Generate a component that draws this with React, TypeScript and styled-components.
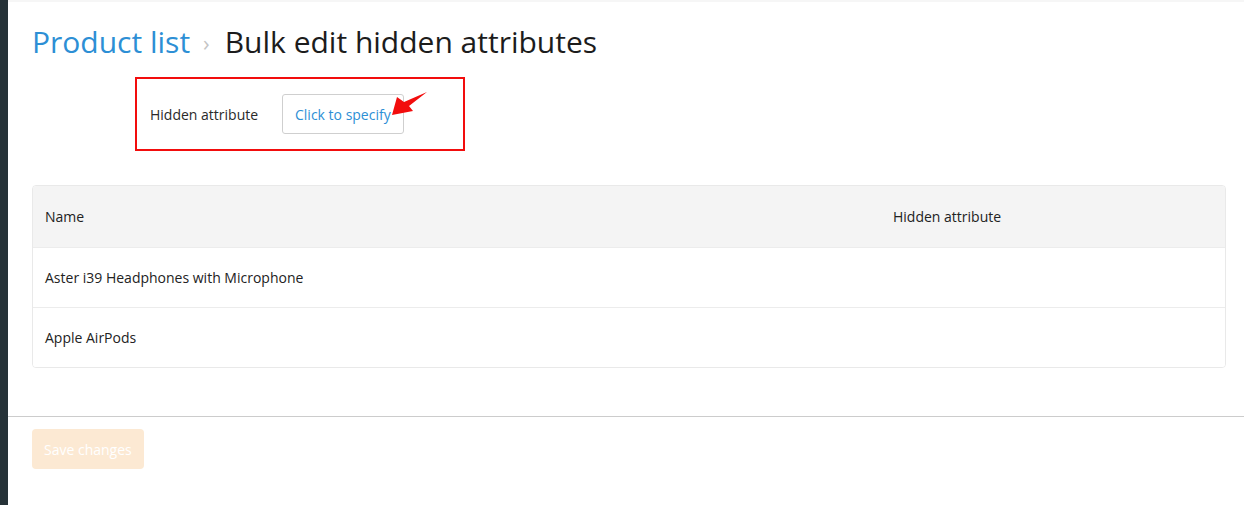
import React from "react";
import styled, { createGlobalStyle } from "styled-components";

const Global = createGlobalStyle`
  html, body { margin: 0; padding: 0; background: #fff; }
  body { font-family: "Open Sans", "Noto Sans", sans-serif; color: #333; }
  * { box-sizing: border-box; }
`;

const Shell = styled.div`
  display: flex;
  min-height: 505px;
`;

const Sidebar = styled.div`
  width: 8px;
  flex: none;
  background: #263238;
`;

const Main = styled.div`
  flex: 1;
  display: flex;
  flex-direction: column;
  border-top: 2px solid #f6f6f6;
`;

const Content = styled.div`
  padding: 0 18px 0 24px;
`;

const Title = styled.h1`
  margin: 20px 0 0;
  font-size: 30px;
  font-weight: 400;
  line-height: 40px;
  color: #1c1c1c;
  display: flex;
  align-items: center;
`;

const Crumb = styled.a`
  color: #2d8fd5;
  text-decoration: none;
`;

const Sep = styled.span`
  color: #c4c4c4;
  font-size: 22px;
  margin: 0 15px 0 13px;
`;

const Annotated = styled.div`
  position: relative;
  margin: 15px 0 0 103px;
  width: 330px;
  height: 74px;
  border: 2px solid #f20d0d;
  display: flex;
  align-items: center;
  padding-left: 13px;
`;

const Label = styled.span`
  font-size: 14px;
  color: #2a2a2a;
  width: 132px;
`;

const PickerButton = styled.button`
  height: 40px;
  padding: 0 12px;
  border: 1px solid #cfcfcf;
  border-radius: 3px;
  background: #fff;
  color: #2d8fd5;
  font-family: inherit;
  font-size: 14px;
  cursor: pointer;
`;

const Arrow = styled.svg`
  position: absolute;
  left: 254px;
  top: 12px;
`;

const Table = styled.div`
  margin-top: 34px;
  border: 1px solid #e9e9e9;
  border-radius: 4px;
  overflow: hidden;
`;

const Row = styled.div<{ $head?: boolean }>`
  display: grid;
  grid-template-columns: 848px 1fr;
  height: ${(p) => (p.$head ? "61px" : "60px")};
  align-items: center;
  background: ${(p) => (p.$head ? "#f4f4f4" : "#fff")};
  & + & { border-top: 1px solid #ececec; }
`;

const Cell = styled.div`
  padding: 0 12px;
  font-size: 14px;
  color: #222;
`;

const Footer = styled.div`
  margin-top: 48px;
  border-top: 1px solid #cccccc;
  padding: 12px 24px;
`;

const SaveButton = styled.button`
  height: 40px;
  padding: 0 12px;
  border: none;
  border-radius: 4px;
  background: #fce9d3;
  color: #fff;
  font-family: inherit;
  font-size: 14px;
`;

export default function App() {
  return (
    <>
      <Global />
      <Shell>
        <Sidebar />
        <Main>
          <Content>
            <Title>
              <Crumb href="#">Product list</Crumb>
              <Sep>›</Sep>
              <span>Bulk edit hidden attributes</span>
            </Title>
            <Annotated>
              <Label>Hidden attribute</Label>
              <PickerButton>Click to specify</PickerButton>
              <Arrow width="40" height="30" viewBox="0 0 40 30">
                <path d="M1 24 L6 6 L13 11 L36 1 L18 15 L22 20 Z" fill="#f20d0d" />
              </Arrow>
            </Annotated>
            <Table>
              <Row $head>
                <Cell>Name</Cell>
                <Cell>Hidden attribute</Cell>
              </Row>
              <Row>
                <Cell>Aster i39 Headphones with Microphone</Cell>
                <Cell />
              </Row>
              <Row>
                <Cell>Apple AirPods</Cell>
                <Cell />
              </Row>
            </Table>
          </Content>
          <Footer>
            <SaveButton disabled>Save changes</SaveButton>
          </Footer>
        </Main>
      </Shell>
    </>
  );
}
